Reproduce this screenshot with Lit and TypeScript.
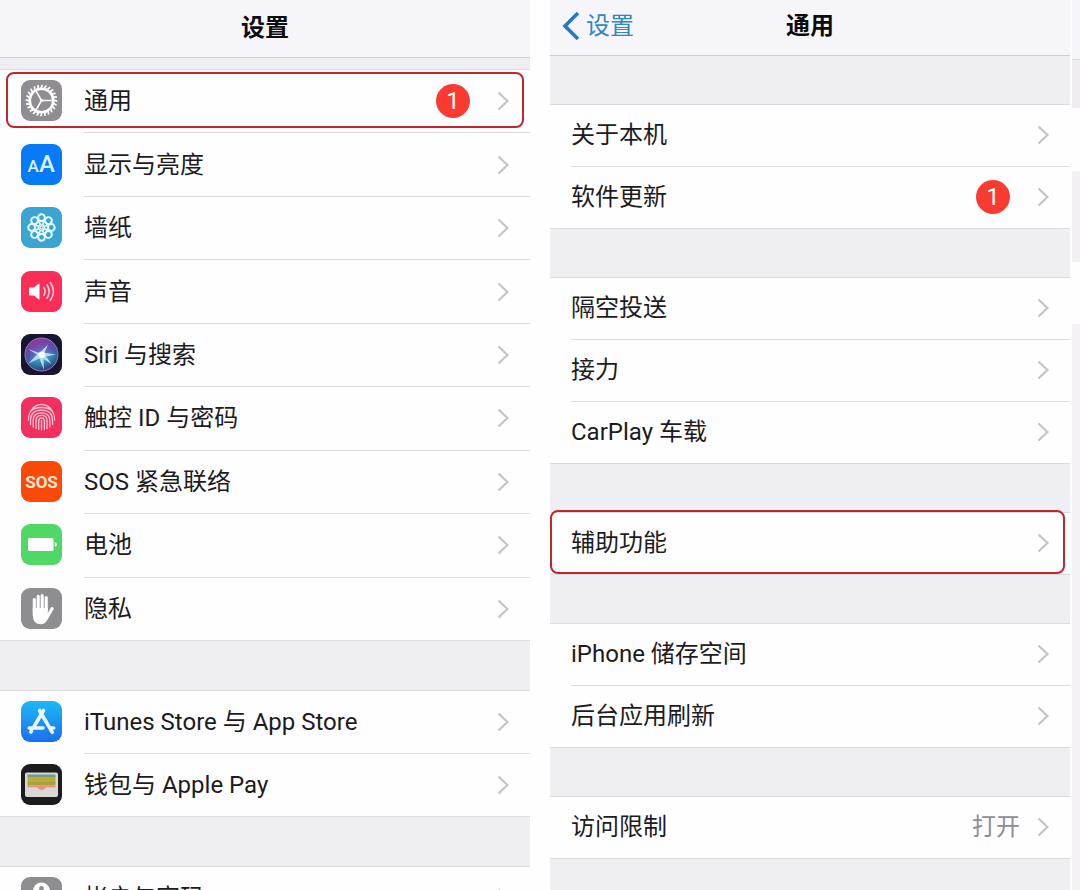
import { LitElement, html, svg, css, nothing } from "lit";
import { customElement, property } from "lit/decorators.js";

type Row = { label: string; icon?: string; badge?: number; value?: string; marked?: boolean };

const teeth = Array.from({ length: 24 }, (_, i) => i * 15);
const petals = Array.from({ length: 8 }, (_, i) => i * 45);

const icons: Record<string, unknown> = {
  general: svg`
    <rect width="41" height="41" rx="9" fill="#8f8d93"/>
    <g fill="none" stroke="#fff" transform="translate(20.5 20.5)">
      ${teeth.map((a) => svg`<path d="M-.4-12.5L.8-15.8" stroke-width="1.7" transform="rotate(${a})"/>`)}
      <circle r="11.8" stroke-width="2.6"/>
      <g stroke-width="1.5"><path d="M0 0H11M0 0L-5.5-9.5M0 0L-5.5 9.5"/></g>
      <circle r="1.6" fill="#fff" stroke="none"/>
    </g>`,
  display: svg`
    <rect width="41" height="41" rx="9" fill="#067af7"/>
    <text x="6.5" y="28" class="aa" font-size="17">A</text>
    <text x="18" y="28" class="aa" font-size="24">A</text>`,
  wallpaper: svg`
    <rect width="41" height="41" rx="9" fill="#3aa5d2"/>
    <g fill="none" stroke="#e6fbff" transform="translate(20.5 20.5)">
      ${petals.map((a) => svg`<g transform="rotate(${a})"><circle cy="-9.8" r="3.4" stroke-width="2"/><circle cy="-4.800" r="1.900" stroke-width="1.300"/></g>`)}
      <circle r="1.600" stroke-width="1.400"/>
    </g>`,
  sound: svg`
    <rect width="41" height="41" rx="9" fill="#fc2d57"/>
    <path d="M8.800 16.500h4.200l4.200-3.500q1.300-1 1.300.6v13.800q0 1.600-1.300.6l-4.200-3.500H8.800q-.8 0-.8-.8v-6.400q0-.8.800-.8z" fill="#fff"/>
    <g fill="none" stroke="#ffd3dc" stroke-width="1.600" stroke-linecap="round">
      <path d="M22.800 16.500q2.400 4 0 8M26 13.800q4.300 6.700 0 13.400M29.300 11.500q6.200 9 0 18"/>
    </g>`,
  siri: svg`
    <defs>
      <radialGradient id="orb"><stop offset="0" stop-color="#fff"/><stop offset=".3" stop-color="#6fc4e8"/><stop offset="1" stop-color="#2b2f62"/></radialGradient>
      <linearGradient id="tint" x1=".3" y1="0" x2=".6" y2="1"><stop offset="0" stop-color="#a72a9c"/><stop offset=".45" stop-color="#5b52b8" stop-opacity=".75"/><stop offset=".7" stop-color="#2489b5" stop-opacity=".6"/><stop offset="1" stop-color="#3c2c7c"/></linearGradient>
    </defs>
    <rect width="41" height="41" rx="9" fill="#171531"/>
    <circle cx="20.500" cy="20.500" r="16.500" fill="url(#orb)"/>
    <circle cx="20.500" cy="20.500" r="16.500" fill="url(#tint)" stroke="#8d86b4" stroke-width="1"/>
    <path d="M18.500 19L27 10.500 23.500 18.800 35 20.500 25 22.500 30.500 30 22.500 25 23 36 18.500 24.500 7.500 29.500 16 20.500 7 15z" fill="#c9f4ff" opacity=".8"/>
    <circle cx="20.800" cy="20.800" r="3.200" fill="#fff"/>`,
  touch: svg`
    <rect width="41" height="41" rx="9" fill="#f22f5f"/>
    <g fill="none" stroke="#ffc4d2" stroke-width="1.300" stroke-linecap="round">
      <path d="M10 13.500Q14 7.500 20.500 7.500T31 13.500"/>
      <path d="M7.500 23Q7 10.500 20.500 10.500T33.500 23"/>
      <path d="M9.500 27.500V23Q10 13.200 20.500 13.200T31.500 23V27.500"/>
      <path d="M12.200 30V23Q12.500 15.800 20.500 15.800T28.800 23V30"/>
      <path d="M15 31.500V23.500Q15 18.300 20.500 18.300T26 23.500V31.500"/>
      <path d="M17.700 32.500V24Q17.700 20.800 20.500 20.800T23.400 24V32.500"/>
      <path d="M20.500 23.500V33"/>
    </g>`,
  sos: svg`
    <rect width="41" height="41" rx="9" fill="#fb4a08"/>
    <text x="20.500" y="26.500" class="sos" font-size="17">SOS</text>`,
  battery: svg`
    <rect width="41" height="41" rx="9" fill="#4fd865"/>
    <rect x="7" y="14" width="25.500" height="13" rx="1.500" fill="#fff"/>
    <path d="M33.800 18.200q2.200.5 2.200 2.300t-2.200 2.300z" fill="#fff"/>`,
  privacy: svg`
    <rect width="41" height="41" rx="9" fill="#8e8d92"/>
    <g stroke="#fff" stroke-width="3.100" stroke-linecap="round" fill="none">
      <path d="M13.300 11.500V24M17.200 8.200V22M21.200 7.500V22M25.200 9.500V23"/>
      <path d="M31.200 20.500L26.500 28.500" stroke-width="3"/>
    </g>
    <path d="M11.750 20H26.750V25.500L30 24Q27.500 31 25 34 23 36.300 19.800 36.300 11.750 36.300 11.750 27z" fill="#fff"/>`,
  store: svg`
    <defs><linearGradient id="sky" x2="0" y2="1"><stop offset="0" stop-color="#1cb9f4"/><stop offset="1" stop-color="#1a6fee"/></linearGradient></defs>
    <rect width="41" height="41" rx="9" fill="url(#sky)"/>
    <g stroke="#e9f8ff" stroke-width="3.600" stroke-linecap="round" fill="none">
      <path d="M22.500 9.500L12.500 26.500M10.500 30L9.900 31M18.500 9.500L31.300 31.300M8.300 27H22M28.800 27H32.700"/>
    </g>`,
  wallet: svg`
    <rect width="41" height="41" rx="9" fill="#1c1b1d"/>
    <rect x="4" y="8.500" width="33" height="24.500" rx="2" fill="#d9d8d2"/>
    <path d="M6.500 10.500h28v3h-28z" fill="#6d9a95"/>
    <path d="M6.500 12.800h28v4.400h-28z" fill="#b9ab3c"/>
    <path d="M6.500 17.200h28v4.300h-28z" fill="#a4a53a"/>
    <path d="M6.500 21.500h28v1.700h-8.500q-1.500 0-2 1-1.200 1.800-3.500 1.800t-3.500-1.800q-.5-1-2-1H6.500z" fill="#ee8f7b"/>`,
  accounts: svg`
    <rect width="41" height="41" rx="9" fill="#8e8d92"/>
    <circle cx="20.500" cy="14" r="8.500" fill="#fff"/>
    <circle cx="20.500" cy="11.500" r="2.400" fill="#8e8d92"/>
    <path d="M19.300 15h2.400v12h-2.400z" fill="#8e8d92"/>`,
};

const mainGroups: Row[][] = [
  [
    { label: "通用", icon: "general", badge: 1, marked: true },
    { label: "显示与亮度", icon: "display" },
    { label: "墙纸", icon: "wallpaper" },
    { label: "声音", icon: "sound" },
    { label: "Siri 与搜索", icon: "siri" },
    { label: "触控 ID 与密码", icon: "touch" },
    { label: "SOS 紧急联络", icon: "sos" },
    { label: "电池", icon: "battery" },
    { label: "隐私", icon: "privacy" },
  ],
  [
    { label: "iTunes Store 与 App Store", icon: "store" },
    { label: "钱包与 Apple Pay", icon: "wallet" },
  ],
  [{ label: "帐户与密码", icon: "accounts" }],
];

const generalGroups: Row[][] = [
  [{ label: "关于本机" }, { label: "软件更新", badge: 1 }],
  [{ label: "隔空投送" }, { label: "接力" }, { label: "CarPlay 车载" }],
  [{ label: "辅助功能", marked: true }],
  [{ label: "iPhone 储存空间" }, { label: "后台应用刷新" }],
  [{ label: "访问限制", value: "打开" }],
];

@customElement("settings-group")
class SettingsGroup extends LitElement {
  @property({ attribute: false }) rows: Row[] = [];

  static styles = css`
    :host { display: grid; background: #fefdff; border-block: 1px solid #dcdbe0; box-sizing: border-box; }
    ul { list-style: none; margin: 0 0 -1px; padding: 0; display: grid; grid-auto-rows: minmax(var(--row, 62px), 1fr); }
    li { display: grid; position: relative; }
    a { display: flex; align-items: center; padding-left: 21px; gap: 22px; color: #1c1b20; text-decoration: none; min-width: 0; }
    .icon { width: 41px; height: 41px; flex: none; display: block; margin-bottom: 2px; }
    .body { flex: 1; align-self: stretch; display: flex; align-items: center; padding: 0 21px var(--drop, 2px) 0; border-bottom: 1px solid #dedde2; min-width: 0; }
    li:last-child .body { border-bottom-color: transparent; }
    .label { flex: 1; white-space: nowrap; }
    .badge { width: 34px; height: 34px; border-radius: 50%; background: #f93b32; color: #fff; display: grid; place-items: center; margin-right: 27px; }
    .value { color: #8e8d93; margin-right: 17px; }
    .chevron { width: 12px; height: 20px; flex: none; }
    .mark { position: absolute; inset: var(--mark, 2px 6px 5px 6px); border: 2px solid #c0272d; border-radius: 8px; pointer-events: none; }
    .aa { font-family: Roboto, sans-serif; fill: #d9f2ff; font-weight: 500; }
    .sos { font-family: Roboto, sans-serif; font-weight: 700; fill: #ffe9d6; text-anchor: middle; }
  `;

  render() {
    return html`<ul>
      ${this.rows.map(
        (r) => html`<li>
          <a href="#">
            ${r.icon ? html`<svg class="icon" viewBox="0 0 41 41" aria-hidden="true">${icons[r.icon]}</svg>` : nothing}
            <span class="body">
              <span class="label">${r.label}</span>
              ${r.badge ? html`<span class="badge">${r.badge}</span>` : nothing}
              ${r.value ? html`<span class="value">${r.value}</span>` : nothing}
              <svg class="chevron" viewBox="0 0 12 20" aria-hidden="true"><path d="M1.500 1.500L10.500 10 1.500 18.500" fill="none" stroke="#c4c3c8" stroke-width="2.200"/></svg>
            </span>
          </a>
          ${r.marked ? html`<span class="mark"></span>` : nothing}
        </li>`
      )}
    </ul>`;
  }
}

@customElement("app-root")
class AppRoot extends LitElement {
  static styles = css`
    :host { display: grid; grid-template-columns: 530fr 540fr 10px; height: 100vh; overflow: hidden; background: #fefdff;
      font: 24px/32px Roboto, "Noto Sans CJK SC", sans-serif; color: #1c1b20; }
    section { display: flex; flex-direction: column; background: #efeef2; min-width: 0; min-height: 0; }
    .general { margin-left: 20px; }
    header { flex: none; display: grid; grid-template-columns: 1fr auto 1fr; align-items: center; box-sizing: border-box; background: #f6f5fa; border-bottom: 1px solid #cfced4; }
    .main header { height: 58px; padding: 0 12px 2px; }
    .general header { height: 56px; padding: 0 12px 4px; }
    h1 { font: inherit; font-weight: 600; margin: 0; grid-column: 2; color: #0c0b10; }
    button { all: unset; display: flex; align-items: center; gap: 6px; color: #2f86c6; cursor: pointer; }
    button svg { width: 18px; height: 30px; }
    .groups { display: flex; flex-direction: column; flex: none; }
    .main .groups { padding-top: 11px; gap: 49px; --row: 63px; --drop: 0px; }
    .general .groups { padding-top: 48px; gap: 48px; --mark: -3px 5px 1px 0; }
    .long { min-height: 572px; }
    .edge { margin-left: 2px; background: linear-gradient(#f5f4fa 59px, #d9d8de 59px 60px, #f0edf2 60px 108px, #fefdff 108px 171px, #f3f0f5 171px 262px, #fefdff 262px 324px, #f5f2f7 324px); }
  `;

  render() {
    return html`
      <section class="main">
        <header><h1>设置</h1></header>
        <div class="groups">
          ${mainGroups.map((g, i) => html`<settings-group class=${i === 0 ? "long" : ""} .rows=${g}></settings-group>`)}
        </div>
      </section>
      <section class="general">
        <header>
          <button type="button">
            <svg viewBox="0 0 18 30" aria-hidden="true"><path d="M16 2L3 15 16 28" fill="none" stroke="#2478c8" stroke-width="3.600"/></svg>设置
          </button>
          <h1>通用</h1>
        </header>
        <div class="groups">
          ${generalGroups.map((g) => html`<settings-group .rows=${g}></settings-group>`)}
        </div>
      </section>
      <div class="edge"></div>
    `;
  }
}
